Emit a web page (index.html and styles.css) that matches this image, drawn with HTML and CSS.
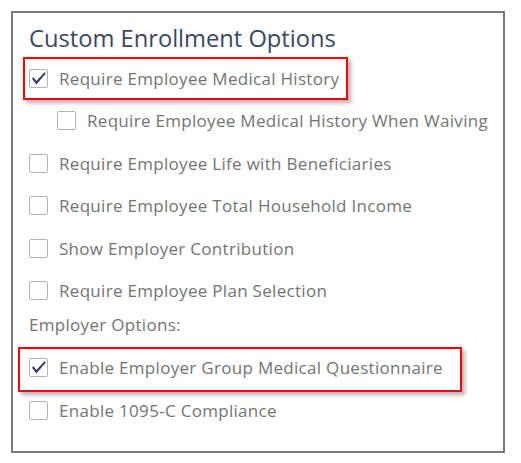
FILE: index.html
```html
<!DOCTYPE html>
<html>
<head>
<meta charset="utf-8">
<link rel="stylesheet" href="styles.css">
</head>
<body>
<div class="panel">
  <h2 class="title">Custom Enrollment Options</h2>
  <div class="row highlight hl-1">
    <span class="box checked"><svg viewBox="0 0 19 19" width="19" height="19"><path d="M3 9.8 L4.6 8.3 L7.4 12 L15.5 3.2 L16.8 4.6 L7.4 15.6 Z" fill="#363c57"/></svg></span>
    <span class="label">Require Employee Medical History</span>
  </div>
  <div class="row indent">
    <span class="box"></span>
    <span class="label">Require Employee Medical History When Waiving</span>
  </div>
  <div class="row">
    <span class="box"></span>
    <span class="label">Require Employee Life with Beneficiaries</span>
  </div>
  <div class="row">
    <span class="box"></span>
    <span class="label">Require Employee Total Household Income</span>
  </div>
  <div class="row">
    <span class="box"></span>
    <span class="label">Show Employer Contribution</span>
  </div>
  <div class="row">
    <span class="box"></span>
    <span class="label">Require Employee Plan Selection</span>
  </div>
  <div class="section">Employer Options:</div>
  <div class="row highlight hl-2">
    <span class="box checked"><svg viewBox="0 0 19 19" width="19" height="19"><path d="M3 9.8 L4.6 8.3 L7.4 12 L15.5 3.2 L16.8 4.6 L7.4 15.6 Z" fill="#363c57"/></svg></span>
    <span class="label">Enable Employer Group Medical Questionnaire</span>
  </div>
  <div class="row">
    <span class="box"></span>
    <span class="label">Enable 1095-C Compliance</span>
  </div>
</div>
</body>
</html>
```

FILE: styles.css
```css
* { box-sizing: border-box; }
html, body { margin: 0; padding: 0; background: #ffffff; }
body {
  font-family: "Open Sans", "Liberation Sans", sans-serif;
  width: 521px;
  height: 463px;
  padding: 11px 0 0 11px;
}
.panel {
  width: 494px;
  height: 442px;
  border: 2px solid #7b7b7b;
  padding: 9px 0 0 16px;
}
.title {
  margin: 0 0 3px 0;
  font-size: 23.7px;
  line-height: 32px;
  font-weight: 400;
  color: #3b4862;
}
.row {
  display: flex;
  align-items: center;
  height: 42.5px;
  position: relative;
  gap: 11px;
}
.row.indent { padding-left: 28px; }
.box {
  width: 19px;
  height: 19px;
  flex: 0 0 19px;
  border: 1px solid #b3b3b3;
  border-radius: 2px;
  background: #fff;
  position: relative;
}
.box svg {
  position: absolute;
  left: -1px;
  top: -1px;
}
.label {
  font-size: 17px;
  letter-spacing: 0.3px;
  color: #747474;
  white-space: nowrap;
}
.section {
  font-size: 17px;
  letter-spacing: 0.3px;
  color: #747474;
  line-height: 25.5px;
  margin-bottom: 9px;
}
.highlight::after {
  content: "";
  position: absolute;
  border: 2px solid #ff0000;
  box-shadow: 3px 3px 4px rgba(0, 0, 0, 0.3);
  pointer-events: none;
}
.hl-1::after {
  left: -6px;
  top: 0px;
  width: 321px;
  height: 39px;
}
.hl-2::after {
  left: -11px;
  top: 0px;
  width: 440px;
  height: 41px;
}
```
